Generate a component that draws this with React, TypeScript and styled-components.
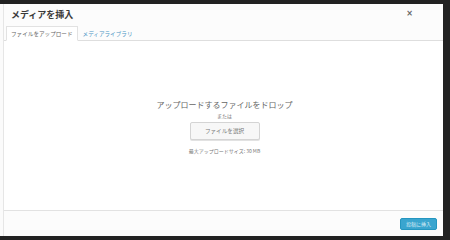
import React from 'react'
import styled, { createGlobalStyle } from 'styled-components'

const GlobalStyle = createGlobalStyle`
  html, body {
    margin: 0;
    padding: 0;
    background: #222;
  }
  body {
    font-family: "Noto Sans CJK JP", "Liberation Sans", sans-serif;
  }
`

export default function App() {
  return (
    <>
      <GlobalStyle />
      <Backdrop>
        <Modal>
          <Frame>
            <Header>
              <Title>メディアを挿入</Title>
              <CloseButton aria-label="閉じる">×</CloseButton>
              <Tabs>
                <Tab active>ファイルをアップロード</Tab>
                <Tab>メディアライブラリ</Tab>
              </Tabs>
            </Header>
            <Uploader>
              <DropText>アップロードするファイルをドロップ</DropText>
              <SmallText>または</SmallText>
              <SelectButton>ファイルを選択</SelectButton>
              <MaxSize>最大アップロードサイズ: 30 MB</MaxSize>
            </Uploader>
            <Footer>
              <InsertButton>投稿に挿入</InsertButton>
            </Footer>
          </Frame>
        </Modal>
      </Backdrop>
    </>
  )
}

const Backdrop = styled.div`
  box-sizing: border-box;
  width: 450px;
  height: 240px;
  padding: 4px 7px 4px 0;
  background: #222;
`
const Modal = styled.div`
  box-sizing: border-box;
  height: 100%;
  padding-left: 3px;
  background: #fbfbfb;
`
const Frame = styled.div`
  box-sizing: border-box;
  display: flex;
  flex-direction: column;
  height: 100%;
  border-left: 1px solid #e6e6e6;
  background: #fff;
`
const Header = styled.div`
  position: relative;
  background: #fcfcfc;
  border-bottom: 1px solid #dedede;
  padding: 3px 0 0 2px;
`
const Title = styled.h1`
  margin: 0 0 0 5px;
  font-size: 9px;
  line-height: 16px;
  font-weight: 700;
  color: #3a3a3a;
`
const CloseButton = styled.button`
  position: absolute;
  top: 5px;
  right: 30px;
  padding: 0;
  border: 0;
  background: transparent;
  font-family: "DejaVu Sans", sans-serif;
  font-size: 8px;
  font-weight: 700;
  line-height: 10px;
  color: #666;
`
const Tabs = styled.div`
  display: flex;
  margin-top: 3px;
  margin-bottom: -1px;
`
const Tab = styled.div<{ active?: boolean }>`
  box-sizing: border-box;
  height: 15px;
  padding: 0 4px;
  font-size: 5.6px;
  line-height: 14px;
  color: ${(p) => (p.active ? '#666' : '#4a94c4')};
  background: ${(p) => (p.active ? '#fff' : 'transparent')};
  border: 1px solid ${(p) => (p.active ? '#e2e2e2' : 'transparent')};
  border-bottom-color: ${(p) => (p.active ? '#fff' : 'transparent')};
`
const Uploader = styled.div`
  flex: 1;
  display: flex;
  flex-direction: column;
  align-items: center;
  padding-top: 58px;
  padding-left: 2px;
`
const DropText = styled.div`
  font-size: 8px;
  line-height: 12px;
  color: #666;
`
const SmallText = styled.div`
  margin-top: 1px;
  font-size: 5px;
  line-height: 8px;
  color: #777;
`
const SelectButton = styled.button`
  box-sizing: border-box;
  width: 70px;
  height: 18px;
  margin-top: 2px;
  padding: 0;
  font-family: inherit;
  font-size: 5.6px;
  color: #777;
  background: #f7f7f7;
  border: 1px solid #d4d4d4;
  border-radius: 2px;
  box-shadow: 0 1px 0 #e2e2e2;
`
const MaxSize = styled.div`
  margin-top: 7px;
  font-size: 5px;
  line-height: 8px;
  color: #777;
`
const Footer = styled.div`
  box-sizing: border-box;
  height: 26px;
  display: flex;
  align-items: center;
  justify-content: flex-end;
  padding-right: 6px;
  background: #fcfcfc;
  border-top: 1px solid #e2e2e2;
`
const InsertButton = styled.button`
  box-sizing: border-box;
  width: 37px;
  height: 12px;
  padding: 0;
  font-family: inherit;
  font-size: 5px;
  color: #d8ecf6;
  background: #3aa5cf;
  border: 1px solid #2496c0;
  border-radius: 2px;
`
